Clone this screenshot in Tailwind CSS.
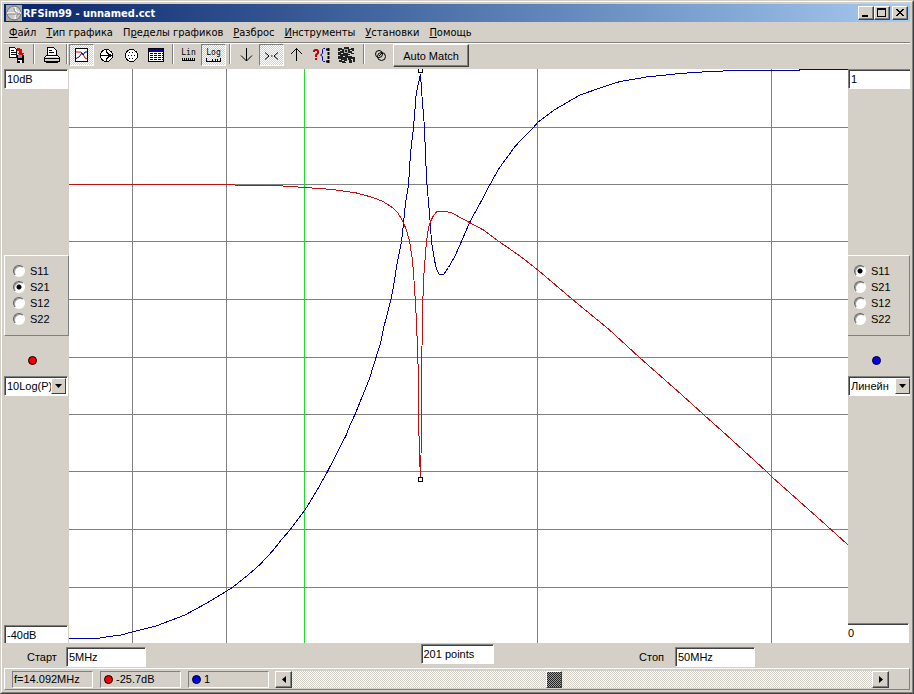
<!DOCTYPE html>
<html lang="ru">
<head>
    <meta charset="UTF-8">
    <meta name="viewport" content="width=device-width, initial-scale=1.0">
    <title>RFSim99 - unnamed.cct</title>
    <script src="https://cdn.jsdelivr.net/npm/@tailwindcss/browser@4"></script>
</head>
<body class="h-screen flex flex-col bg-[#d4d0c8] text-black text-[11px] leading-4 font-['Liberation_Sans',Arial,sans-serif] border-t border-l border-t-[#d4d0c8] border-l-[#d4d0c8] border-r border-b border-r-[#404040] border-b-[#404040] overflow-hidden">
<div class="flex-1 min-h-0 flex flex-col border border-t-white border-l-white border-r-[#808080] border-b-[#808080] p-[2px]">

    <!-- Title bar -->
    <header class="h-[18px] shrink-0 flex items-center bg-gradient-to-r from-[#0a246a] to-[#a6caf0] text-white pl-[2px] pr-[2px]">
        <svg class="w-4 h-4 shrink-0" viewBox="0 0 16 16" fill="none">
            <rect width="16" height="16" fill="#a8a8a8"/>
            <circle cx="8" cy="8" r="7" fill="#c8c8c8" stroke="#707070"/>
            <path d="M1 8h14M9 2q0 6 6 6q-6 0-6 6" stroke="#f8f8f8" stroke-width="1.6"/>
            <path d="M2 9h12M8 3q0 5 4 5M10 12q1-3 4-4" stroke="#888"/>
        </svg>
        <h1 class="flex-1 pl-[1px] pt-[1px] text-[11px] font-bold font-['DejaVu_Sans_Condensed','DejaVu_Sans',sans-serif] whitespace-nowrap">RFSim99 - unnamed.cct</h1>
        <div class="flex">
            <button aria-label="Minimize" class="w-4 h-[14px] bg-[#d4d0c8] border border-t-white border-l-white border-r-[#404040] border-b-[#404040] shadow-[inset_-1px_-1px_0_#808080]">
                <svg class="w-[14px] h-3" viewBox="0 0 14 12"><path d="M3 8h6v2H3z"/></svg>
            </button>
            <button aria-label="Maximize" class="w-4 h-[14px] bg-[#d4d0c8] border border-t-white border-l-white border-r-[#404040] border-b-[#404040] shadow-[inset_-1px_-1px_0_#808080]">
                <svg class="w-[14px] h-3" viewBox="0 0 14 12"><path fill-rule="evenodd" d="M2 1h9v9H2zM3 3v6h7V3z"/></svg>
            </button>
            <button aria-label="Close" class="ml-[2px] w-4 h-[14px] bg-[#d4d0c8] border border-t-white border-l-white border-r-[#404040] border-b-[#404040] shadow-[inset_-1px_-1px_0_#808080]">
                <svg class="w-[14px] h-3" viewBox="0 0 14 12" shape-rendering="crispEdges"><path d="M3 2h2v1h1v1h2V3h1V2h2v1h-1v1H9v1H8v1h1v1h1v1h1v1H9V8H8V7H6v1H5v1H3V8h1V7h1V6h1V5H5V4H4V3H3z"/></svg>
            </button>
        </div>
    </header>

    <!-- Menu -->
    <nav class="h-5 shrink-0 flex items-center gap-[10px] pl-[5px] pt-[1px] font-['DejaVu_Sans_Condensed','DejaVu_Sans',sans-serif] whitespace-nowrap">
        <a href="#"><u>Ф</u>айл</a>
        <a href="#"><u>Т</u>ип графика</a>
        <a href="#">П<u>р</u>еделы графиков</a>
        <a href="#"><u>Р</u>азброс</a>
        <a href="#"><u>И</u>нструменты</a>
        <a href="#"><u>У</u>становки</a>
        <a href="#"><u>П</u>омощь</a>
    </nav>

    <!-- Toolbar -->
    <div class="h-[27px] shrink-0 flex items-start border-t border-t-[#808080] shadow-[inset_0_1px_0_#fff] pt-[1px]">
        <button aria-label="Save" class="w-[25px] h-[22px] flex items-center justify-center">
            <svg class="w-[17px] h-[18px]" viewBox="0 0 18 18" fill="none" shape-rendering="crispEdges">
                <path d="M1.500 1.500h6l2 2v8h-8z" fill="#fff" stroke="#000"/>
                <path d="M3 4.500h3M3 6.500h5M3 8.500h5" stroke="#000"/>
                <path d="M9 2h4v1h2v4h2l-3 4-4-4h2V5H9z" fill="#e00000"/>
                <path d="M9 9h8v8h-8z" fill="#000"/><path d="M11 9h4v3h-4z" fill="#b070c0"/><path d="M11 14h4v3h-2v-2h-2z" fill="#fff"/>
            </svg>
        </button>
        <span class="w-[10px] h-5 flex justify-center"><i class="w-[2px] h-full bg-[#808080] border-r border-r-white"></i></span>
        <button aria-label="Print" class="w-[25px] h-[22px] flex items-center justify-center">
            <svg class="w-[17px] h-[18px]" viewBox="0 0 17 18" fill="none" shape-rendering="crispEdges">
                <path d="M4.500 9.500v-8h6l3 3v5" fill="#fff" stroke="#000"/>
                <path d="M6 4.500h3M6 6.500h5" stroke="#000"/>
                <path d="M3.500 9.500h11l2 2v4h-15v-4z" fill="#d4d0c8" stroke="#000"/>
                <path d="M1 12.500h16M3 16.500h12" stroke="#000"/><path d="M3 10.500h12" stroke="#fff"/>
            </svg>
        </button>
        <span class="w-[5px] h-5 flex justify-center"><i class="w-[2px] h-full bg-[#808080] border-r border-r-white"></i></span>
        <button aria-label="Graph" aria-pressed="true" class="w-[25px] h-[22px] flex items-center justify-center border border-t-[#808080] border-l-[#808080] border-r-white border-b-white bg-[repeating-conic-gradient(#fff_0_25%,#d4d0c8_0_50%)] bg-[length:2px_2px]">
            <svg class="w-[13px] h-[14px]" viewBox="0 0 13 14" fill="none">
                <rect x=".5" y=".5" width="12" height="13" fill="#fff" stroke="#000"/>
                <path d="M1 4h5l2 2 2 4 2 1" stroke="#e00000"/><path d="M1 10.500l3-1.500 3-4 1 2 2-3h2" stroke="#0000a0"/>
            </svg>
        </button>
        <button aria-label="Smith chart" class="w-[25px] h-[22px] flex items-center justify-center">
            <svg class="w-[13px] h-[13px]" viewBox="0 0 13 13" fill="none" stroke="#000" shape-rendering="crispEdges">
                <circle cx="6.500" cy="6.500" r="6" fill="#fff"/><path d="M1 6.500h12M6.500 1v2l2 2 4 1.500-4 1.500-2 2v2"/>
            </svg>
        </button>
        <button aria-label="Polar chart" class="w-[25px] h-[22px] flex items-center justify-center">
            <svg class="w-[13px] h-[13px]" viewBox="0 0 13 13" fill="none" stroke="#000" shape-rendering="crispEdges">
                <circle cx="6.500" cy="6.500" r="6" fill="#fff"/>
                <path stroke-dasharray="1 2" d="M4 3.500h6M3 6.500h8M4 9.500h6"/>
            </svg>
        </button>
        <button aria-label="Table" class="w-[25px] h-[22px] flex items-center justify-center">
            <svg class="w-[17px] h-[14px]" viewBox="0 0 17 14" fill="none" shape-rendering="crispEdges">
                <rect x=".5" y=".5" width="15" height="13" fill="#fff" stroke="#000"/><path d="M1 1h14v3H1z" fill="#0000b0"/>
                <path stroke="#000" stroke-dasharray="3 1" d="M2 5.500h13M2 7.500h13M2 9.500h13M2 11.500h13"/>
            </svg>
        </button>
        <span class="w-[7px] h-5 flex justify-center"><i class="w-[2px] h-full bg-[#808080] border-r border-r-white"></i></span>
        <button class="w-[25px] h-[22px] flex flex-col items-center justify-center">
            <span class="text-[8px] leading-[8px] font-['DejaVu_Sans_Mono',monospace]">Lin</span>
            <svg class="w-[13px] h-1" viewBox="0 0 13 4" fill="none" stroke="#000" shape-rendering="crispEdges"><path d="M0 3.500h13M.5 1v2M2.500 1v2M4.500 1v2M6.500 1v2M8.500 1v2M10.500 1v2M12.500 1v2"/></svg>
        </button>
        <button aria-pressed="true" class="w-[25px] h-[22px] flex flex-col items-center justify-center border border-t-[#808080] border-l-[#808080] border-r-white border-b-white bg-[repeating-conic-gradient(#fff_0_25%,#d4d0c8_0_50%)] bg-[length:2px_2px]">
            <span class="text-[8px] leading-[10px] font-['DejaVu_Sans_Mono',monospace]">Log</span>
            <svg class="w-[15px] h-1" viewBox="0 0 15 4" fill="none" stroke="#000" shape-rendering="crispEdges"><path d="M0 3.500h15M.5 0v3M6.500 1v2M9.500 1v2M11.500 1v2M14.500 0v3"/></svg>
        </button>
        <span class="w-2 h-5 flex justify-center"><i class="w-[2px] h-full bg-[#808080] border-r border-r-white"></i></span>
        <button aria-label="Down" class="w-[25px] h-[22px] flex items-center justify-center">
            <svg class="w-[13px] h-[14px]" viewBox="0 0 13 14" fill="none" stroke="#000"><path d="M6.500 0v13M1 7.500l5.500 5.500 5.500-5.500"/></svg>
        </button>
        <button aria-label="Center" aria-pressed="true" class="w-[25px] h-[22px] flex items-center justify-center border border-t-[#808080] border-l-[#808080] border-r-white border-b-white bg-[repeating-conic-gradient(#fff_0_25%,#d4d0c8_0_50%)] bg-[length:2px_2px]">
            <svg class="w-[15px] h-[14px]" viewBox="0 0 15 14" fill="none" stroke="#000"><path d="M1 4.500l4 3.500-4 3.500M14 4.500l-4 3.500 4 3.500M7 8h1.500"/></svg>
        </button>
        <button aria-label="Up" class="w-[25px] h-[22px] flex items-center justify-center">
            <svg class="w-[13px] h-[14px]" viewBox="0 0 13 14" fill="none" stroke="#000"><path d="M6.500 13V0M1 6l5.500-5.500 5.500 5.500"/></svg>
        </button>
        <button aria-label="Parameters" class="w-[25px] h-[22px] flex items-center justify-center">
            <svg class="w-[17px] h-4" viewBox="0 0 17 16" fill="none">
                <path d="M1 5V4l1-1h2l1 1v2L3 8v2M3 11v2" stroke="#d00000" stroke-width="2"/>
                <path d="M12 1.500h-1.500l-1 1v4L7.500 8l2 1.500v4l1 1H12" stroke="#0000c0"/>
                <path d="M13 2.500h2M13 14.500h2M15.500 1v15" stroke="#000" stroke-width="2" stroke-dasharray="3 1"/>
            </svg>
        </button>
        <button aria-label="Tolerance" class="w-[25px] h-[22px] flex items-center justify-center">
            <svg class="w-[17px] h-4" viewBox="0 0 17 16" fill="none" stroke="#000" shape-rendering="crispEdges">
                <path d="M0 1h4v1h2V0h5v2h2V1h3v3h-2v2h2v1h-4v2h2v1h3v5h-2v-3h-1v4h-3v-3h-1v-2H9v3H7v1h1v2H4v-2H1v-2h2v-1H0v-3h2V8H0V5h2V4H0z" fill="#222" stroke="none"/>
                <circle cx="8" cy="4" r="2" stroke="#aaa"/><path d="M2 3.500h2M3 6.500h2M10 6.500h3M5 9.500h2M10 8.500h2M4 13.500h2M12 3.500h2M13 12.500h2" stroke="#d4d0c8"/>
            </svg>
        </button>
        <span class="w-[9px] h-5 flex justify-center"><i class="w-[2px] h-full bg-[#808080] border-r border-r-white"></i></span>
        <button aria-label="Overlay" class="w-[25px] h-[22px] flex items-center justify-center">
            <svg class="w-[13px] h-[13px]" viewBox="0 0 13 13" fill="none" stroke="#000"><circle cx="5" cy="5" r="3.500"/><circle cx="7.500" cy="7.500" r="4"/><path d="M5 7l3-3"/></svg>
        </button>
        <button class="w-[76px] h-[23px] text-[11px] bg-[#d4d0c8] border border-t-white border-l-white border-r-[#404040] border-b-[#404040] shadow-[inset_-1px_-1px_0_#808080]">Auto Match</button>
    </div>

    <!-- Graph with both axes -->
    <main class="flex-1 min-h-0 flex">
        <section class="w-[65px] shrink-0 flex flex-col">
            <input aria-label="Left maximum" value="10dB" class="w-16 h-5 bg-white px-[2px] border border-t-[#808080] border-l-[#808080] border-r-white border-b-white shadow-[inset_1px_1px_0_#404040]">
            <fieldset class="mt-[166px] h-[81px] pt-[7px] pl-2 border border-t-white border-l-white border-r-[#808080] border-b-[#808080]">
                <label class="flex items-center gap-[5px] h-4"><input type="radio" name="left" class="appearance-none w-3 h-3 rounded-full bg-white border border-t-[#606060] border-l-[#606060] border-r-white border-b-white shadow-[inset_1px_1px_0_#999] checked:bg-[radial-gradient(circle,#000_2px,#fff_3px)]">S11</label>
                <label class="flex items-center gap-[5px] h-4"><input type="radio" name="left" checked class="appearance-none w-3 h-3 rounded-full bg-white border border-t-[#606060] border-l-[#606060] border-r-white border-b-white shadow-[inset_1px_1px_0_#999] checked:bg-[radial-gradient(circle,#000_2px,#fff_3px)]">S21</label>
                <label class="flex items-center gap-[5px] h-4"><input type="radio" name="left" class="appearance-none w-3 h-3 rounded-full bg-white border border-t-[#606060] border-l-[#606060] border-r-white border-b-white shadow-[inset_1px_1px_0_#999] checked:bg-[radial-gradient(circle,#000_2px,#fff_3px)]">S12</label>
                <label class="flex items-center gap-[5px] h-4"><input type="radio" name="left" class="appearance-none w-3 h-3 rounded-full bg-white border border-t-[#606060] border-l-[#606060] border-r-white border-b-white shadow-[inset_1px_1px_0_#999] checked:bg-[radial-gradient(circle,#000_2px,#fff_3px)]">S22</label>
            </fieldset>
            <div class="h-10 flex items-center justify-center pt-[9px] pr-2"><i class="w-[9px] h-[9px] rounded-full bg-[#f00000] border border-black"></i></div>
            <div class="relative w-16 h-5">
                <select aria-label="Left scale" class="appearance-none w-full h-full bg-white pl-[2px] border border-t-[#808080] border-l-[#808080] border-r-white border-b-white shadow-[inset_1px_1px_0_#404040]"><option>10Log(P)</option></select>
                <span class="absolute right-[2px] top-[2px] w-[15px] h-4 pointer-events-none flex items-center justify-center bg-[#d4d0c8] border border-t-white border-l-white border-r-[#404040] border-b-[#404040]"><svg class="w-[7px] h-1" viewBox="0 0 7 4"><path d="M0 0h7L3.500 4z"/></svg></span>
            </div>
            <input aria-label="Left minimum" value="-40dB" class="mt-auto w-16 h-[18px] bg-white px-[2px] border-t border-l border-r border-t-[#808080] border-l-[#808080] border-r-white shadow-[inset_1px_1px_0_#404040]">
        </section>

        <svg class="flex-1 min-w-0 h-full bg-white" viewBox="69 69 779 574" preserveAspectRatio="none" fill="none" shape-rendering="crispEdges">
            <path stroke="#808080" d="M132.500 69v574M226.500 69v574M537.500 69v574M771.500 69v574M69 127.500h779M69 184.500h779M69 241.500h779M69 299.500h779M69 357.500h779M69 414.500h779M69 471.500h779M69 529.500h779M69 587.500h779"/>
            <path stroke="#20d830" d="M304.500 69v574"/>
            <path stroke="#0000a0" d="M69 638.500H97L106 637L121 635L132 632L156 626L185 615L206 603.500L226 591.500L233 587L248 575L260 564.500L273 550.500L282 539L290 530L305 510L315 493.500L320 485L327.500 471.500L346.500 434.500L350 425L355 414.500L369.500 378.500L376 357.500L381 341.500L384 326.500L391 299.500L394 283.500L396.500 266.500L401.500 241.500L403.500 223.500L405.500 203.500L408.500 184.500L410.500 153.500L413.500 127.500L416 96.500L417.500 87.500L420.500 74L421.500 90L424.500 127.500L425.500 156.500L427 184.500L430 220L431.500 241.500L434.500 260L436.500 269.500L439.500 274.500H443.500L448.500 267.500L455 256L461.500 241.500L470 221.500L480 203.500L490 184.500L499 168.500L515 146.500L523.500 137.500L533.500 127.500L537.500 122.500L555 109.500L580 95L601.500 87.500L620 81.500L646.500 77L680 73.500L710 71.500L736.500 70.500H799V69.500H848"/>
            <path stroke="#c01010" d="M69 184.500H230L240 185.500H275L290 186.500L305 187.500L333 189.500L356.500 193L373 197.500L383 201.500L393 208L398 213L403.500 222.500L406.500 230.500L409.500 241L412.500 260L414.500 287L416 313L417.500 347L418.500 380V413L419.500 457L420.500 477L421 457L421.500 380L422.500 313L423.500 280L425 260L426.500 241L428.500 228L430.500 221.500L433.500 215.500L436.500 212L441.500 211.500H446.500L453.500 213.500L460 217.500L469.500 222.500L483.500 230L499 241.500L520 256L538.500 270.500L572.500 299.500L608.500 329L639.500 357.500L682 395L703.500 414.500L726.500 435L766.500 471.500L771.500 476.500L831 529.500L848 545"/>
            <path stroke="#000" d="M418.500 477.500h4v4h-4zM418.500 69v3.500h4V69"/>
        </svg>

        <section class="w-[62px] shrink-0 flex flex-col">
            <input aria-label="Right maximum" value="1" class="w-full h-5 bg-white px-[2px] border-t border-l border-b border-t-[#808080] border-l-[#808080] border-b-white shadow-[inset_1px_1px_0_#404040]">
            <fieldset class="mt-[166px] h-[81px] pt-[7px] pl-[6px] border-t border-r border-b border-t-white border-r-[#808080] border-b-[#808080]">
                <label class="flex items-center gap-[5px] h-4"><input type="radio" name="right" checked class="appearance-none w-3 h-3 rounded-full bg-white border border-t-[#606060] border-l-[#606060] border-r-white border-b-white shadow-[inset_1px_1px_0_#999] checked:bg-[radial-gradient(circle,#000_2px,#fff_3px)]">S11</label>
                <label class="flex items-center gap-[5px] h-4"><input type="radio" name="right" class="appearance-none w-3 h-3 rounded-full bg-white border border-t-[#606060] border-l-[#606060] border-r-white border-b-white shadow-[inset_1px_1px_0_#999] checked:bg-[radial-gradient(circle,#000_2px,#fff_3px)]">S21</label>
                <label class="flex items-center gap-[5px] h-4"><input type="radio" name="right" class="appearance-none w-3 h-3 rounded-full bg-white border border-t-[#606060] border-l-[#606060] border-r-white border-b-white shadow-[inset_1px_1px_0_#999] checked:bg-[radial-gradient(circle,#000_2px,#fff_3px)]">S12</label>
                <label class="flex items-center gap-[5px] h-4"><input type="radio" name="right" class="appearance-none w-3 h-3 rounded-full bg-white border border-t-[#606060] border-l-[#606060] border-r-white border-b-white shadow-[inset_1px_1px_0_#999] checked:bg-[radial-gradient(circle,#000_2px,#fff_3px)]">S22</label>
            </fieldset>
            <div class="h-10 flex items-center justify-center pt-[9px] pr-[6px]"><i class="w-[9px] h-[9px] rounded-full bg-[#0000e8] border border-black"></i></div>
            <div class="relative w-full h-5">
                <select aria-label="Right scale" class="appearance-none w-full h-full bg-white pl-[2px] border-t border-l border-b border-t-[#808080] border-l-[#808080] border-b-white shadow-[inset_1px_1px_0_#404040]"><option>Линейн</option></select>
                <span class="absolute right-0 top-[2px] w-[15px] h-4 pointer-events-none flex items-center justify-center bg-[#d4d0c8] border border-t-white border-l-white border-r-[#404040] border-b-[#404040]"><svg class="w-[7px] h-1" viewBox="0 0 7 4"><path d="M0 0h7L3.500 4z"/></svg></span>
            </div>
            <input aria-label="Right minimum" value="0" class="mt-auto w-[61px] h-5 bg-white border-t border-r border-b border-t-[#808080] border-r-white border-b-white shadow-[inset_0_1px_0_#404040]">
        </section>
    </main>

    <!-- Frequency range -->
    <div class="h-[25px] shrink-0 grid grid-cols-[1fr_auto_1fr] items-center">
        <div class="flex items-center gap-[9px] pl-[23px] pt-[2px]">
            <label for="start">Старт</label>
            <input id="start" value="5MHz" class="w-20 h-5 bg-white px-[2px] border border-t-[#808080] border-l-[#808080] border-r-white border-b-white shadow-[inset_1px_1px_0_#404040]">
        </div>
        <input aria-label="Points" value="201 points" class="w-[73px] h-5 mb-[3px] bg-white px-[2px] border border-t-[#808080] border-l-[#808080] border-r-white border-b-white shadow-[inset_1px_1px_0_#404040]">
        <div class="flex items-center justify-end gap-[11px] pr-[155px] pt-[2px]">
            <label for="stop">Стоп</label>
            <input id="stop" value="50MHz" class="w-20 h-5 bg-white px-[2px] border border-t-[#808080] border-l-[#808080] border-r-white border-b-white shadow-[inset_1px_1px_0_#404040]">
        </div>
    </div>

    <!-- Readout and scroll bar -->
    <footer class="h-[22px] shrink-0 flex items-center border border-t-white border-l-white border-r-[#808080] border-b-[#808080] pl-[7px] pr-5">
        <div class="flex gap-[7px]">
            <output class="w-[81px] h-[17px] pl-[1px] flex items-center border border-t-[#808080] border-l-[#808080] border-r-white border-b-white">f=14.092MHz</output>
            <output class="w-[81px] h-[17px] pl-[3px] flex items-center gap-[3px] border border-t-[#808080] border-l-[#808080] border-r-white border-b-white"><i class="w-[9px] h-[9px] rounded-full bg-[#f00000] border border-black"></i>-25.7dB</output>
            <output class="w-[81px] h-[17px] pl-[3px] flex items-center gap-[3px] border border-t-[#808080] border-l-[#808080] border-r-white border-b-white"><i class="w-[9px] h-[9px] rounded-full bg-[#0000e8] border border-black"></i>1</output>
        </div>
        <div class="ml-[6px] flex-1 flex h-[17px] bg-[repeating-conic-gradient(#fff_0_25%,#d4d0c8_0_50%)] bg-[length:2px_2px]">
            <button aria-label="Scroll left" class="w-[17px] h-[17px] flex items-center justify-center bg-[#d4d0c8] border border-t-white border-l-white border-r-[#404040] border-b-[#404040] shadow-[inset_-1px_-1px_0_#808080]"><svg class="w-1 h-[7px]" viewBox="0 0 4 7"><path d="M4 0v7L0 3.500z"/></svg></button>
            <input type="range" aria-label="Frequency" min="0" max="100" value="45" class="flex-1 min-w-0 h-[17px] appearance-none bg-transparent [&::-webkit-slider-thumb]:appearance-none [&::-webkit-slider-thumb]:w-4 [&::-webkit-slider-thumb]:h-[17px] [&::-webkit-slider-thumb]:bg-[repeating-conic-gradient(#202020_0_25%,#a0a0a0_0_50%)] [&::-webkit-slider-thumb]:bg-[length:2px_2px] [&::-webkit-slider-thumb]:border [&::-webkit-slider-thumb]:border-t-white [&::-webkit-slider-thumb]:border-l-white [&::-webkit-slider-thumb]:border-r-[#404040] [&::-webkit-slider-thumb]:border-b-[#404040]">
            <button aria-label="Scroll right" class="w-[17px] h-[17px] flex items-center justify-center bg-[#d4d0c8] border border-t-white border-l-white border-r-[#404040] border-b-[#404040] shadow-[inset_-1px_-1px_0_#808080]"><svg class="w-1 h-[7px]" viewBox="0 0 4 7"><path d="M0 0v7L4 3.500z"/></svg></button>
        </div>
    </footer>
</div>
</body>
</html>
